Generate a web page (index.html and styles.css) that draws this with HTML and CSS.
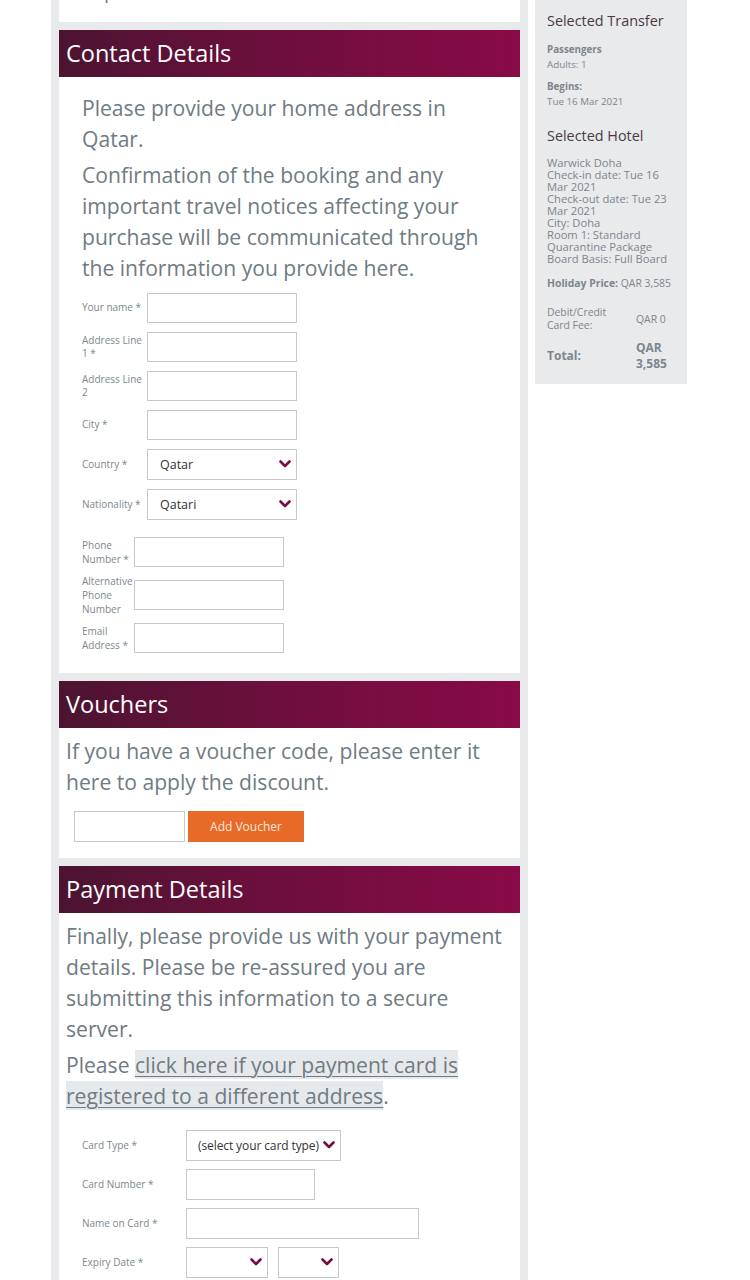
FILE: index.html
```html
<!DOCTYPE html>
<html lang="en">
<head>
<meta charset="utf-8">
<title>Booking details</title>
<link rel="stylesheet" href="styles.css">
</head>
<body>
<div class="page">
  <div class="main">
    <div class="panel top-panel"><p>p</p></div>

    <section class="panel">
      <h2 class="panel-head">Contact Details</h2>
      <div class="panel-body contact-body">
        <p class="lead">Please provide your home address in Qatar.</p>
        <p class="lead">Confirmation of the booking and any important travel notices affecting your purchase will be communicated through the information you provide here.</p>
        <div class="form-grid addr-grid">
          <label>Your name *</label><input type="text">
          <label>Address Line 1 *</label><input type="text">
          <label>Address Line 2</label><input type="text">
          <label>City *</label><input type="text">
          <label>Country *</label>
          <div class="select-wrap"><select><option>Qatar</option></select><svg class="chev" viewBox="0 0 12 8"><path d="M1.5 1.5 L6 6 L10.5 1.5"/></svg></div>
          <label>Nationality *</label>
          <div class="select-wrap"><select><option>Qatari</option></select><svg class="chev" viewBox="0 0 12 8"><path d="M1.5 1.5 L6 6 L10.5 1.5"/></svg></div>
        </div>
        <div class="form-grid phone-grid">
          <label>Phone Number *</label><input type="text">
          <label>Alternative Phone Number</label><input type="text">
          <label>Email Address *</label><input type="text">
        </div>
      </div>
    </section>

    <section class="panel">
      <h2 class="panel-head">Vouchers</h2>
      <div class="panel-body voucher-body">
        <p class="lead">If you have a voucher code, please enter it here to apply the discount.</p>
        <div class="voucher-row">
          <input type="text" class="voucher-input">
          <button type="button" class="btn-orange">Add Voucher</button>
        </div>
      </div>
    </section>

    <section class="panel">
      <h2 class="panel-head">Payment Details</h2>
      <div class="panel-body payment-body">
        <p class="lead">Finally, please provide us with your payment details. Please be re-assured you are submitting this information to a secure server.</p>
        <p class="lead">Please <a href="#" class="hl-link">click here if your payment card is registered to a different address</a>.</p>
        <div class="form-grid pay-grid">
          <label>Card Type *</label>
          <div class="select-wrap w155"><select class="card-type"><option>(select your card type)</option></select><svg class="chev" viewBox="0 0 12 8"><path d="M1.5 1.5 L6 6 L10.5 1.5"/></svg></div>
          <label>Card Number *</label><input type="text" class="w129">
          <label>Name on Card *</label><input type="text" class="w233">
          <label>Expiry Date *</label>
          <div class="expiry">
            <div class="select-wrap w82"><select><option></option></select><svg class="chev" viewBox="0 0 12 8"><path d="M1.5 1.5 L6 6 L10.5 1.5"/></svg></div>
            <div class="select-wrap w61"><select><option></option></select><svg class="chev" viewBox="0 0 12 8"><path d="M1.5 1.5 L6 6 L10.5 1.5"/></svg></div>
          </div>
        </div>
      </div>
    </section>
  </div>

  <aside class="sidebar">
    <h3 class="side-title">Selected Transfer</h3>
    <div class="side-block">
      <div class="side-label">Passengers</div>
      <div>Adults: 1</div>
    </div>
    <div class="side-block">
      <div class="side-label">Begins:</div>
      <div>Tue 16 Mar 2021</div>
    </div>
    <h3 class="side-title hotel-title">Selected Hotel</h3>
    <div class="hotel-info">
      <div>Warwick Doha</div>
      <div>Check-in date: Tue 16 Mar 2021</div>
      <div>Check-out date: Tue 23 Mar 2021</div>
      <div>City: Doha</div>
      <div>Room 1: Standard Quarantine Package</div>
      <div>Board Basis: Full Board</div>
    </div>
    <div class="price-line"><b>Holiday Price:</b> QAR 3,585</div>
    <div class="totals">
      <div class="t-label">Debit/Credit Card Fee:</div><div class="t-val">QAR 0</div>
      <div class="t-label strong">Total:</div><div class="t-val strong">QAR 3,585</div>
    </div>
  </aside>
</div>
</body>
</html>
```

FILE: styles.css
```css
* { box-sizing: border-box; }
html, body { margin: 0; padding: 0; background: #fff; }
body {
  font-family: "Open Sans", Lato, Arial, sans-serif;
  color: #6f7a82;
  width: 750px;
}
.page {
  display: flex;
  align-items: flex-start;
  gap: 7px;
  padding-left: 51px;
}
.main {
  width: 477px;
  background: #e8eaec;
  padding: 0 8px;
}
.panel {
  background: #fff;
  margin-bottom: 8px;
}
.top-panel {
  height: 22px;
  overflow: hidden;
  padding-left: 45px;
}
.top-panel p {
  margin: -22px 0 0;
  font-size: 20px;
  line-height: 26px;
}
.panel-head {
  margin: 0;
  height: 47px;
  line-height: 46px;
  padding-left: 7px;
  font-size: 23.5px;
  font-weight: 400;
  color: #fff;
  background: linear-gradient(90deg, #4c1431 0%, #6c0f3c 45%, #880a47 100%);
}
.lead {
  margin: 0 0 5px;
  font-size: 21.1px;
  line-height: 31px;
  color: #707b83;
}
.contact-body { padding: 15px 23px 20px; }
.voucher-body { padding: 7px 8px 16px 7px; }
.payment-body { padding: 7px 8px 6px 7px; }

.form-grid {
  display: grid;
  align-items: center;
  font-size: 10px;
  line-height: 13.5px;
}
.form-grid label { color: #7d878e; }
.addr-grid {
  margin-top: 10px;
  grid-template-columns: 65px 150px;
  row-gap: 9px;
}
.phone-grid {
  margin-top: 17px;
  grid-template-columns: 52px 150px;
  row-gap: 7px;
  line-height: 14px;
}
.pay-grid {
  margin: 19px 0 0 16px;
  grid-template-columns: 104px auto;
  row-gap: 8px;
  justify-items: start;
}
input[type="text"] {
  height: 30px;
  width: 150px;
  border: 1px solid #c6c8ca;
  background: #fff;
  margin: 0;
  padding: 0 8px;
  font: inherit;
}
.pay-grid input[type="text"] { height: 31px; }
.select-wrap {
  position: relative;
  width: 150px;
  height: 31px;
}
.select-wrap select {
  -webkit-appearance: none;
  appearance: none;
  width: 100%;
  height: 100%;
  border: 1px solid #c6c8ca;
  background: #fff;
  border-radius: 0;
  margin: 0;
  padding: 0 12px;
  font-family: "Open Sans", Lato, Arial, sans-serif;
  font-size: 12.5px;
  color: #333;
}
.chev {
  position: absolute;
  right: 6px;
  top: 11px;
  width: 12px;
  height: 8px;
  fill: none;
  stroke: #7a0c45;
  stroke-width: 2.6;
  stroke-linecap: round;
  stroke-linejoin: round;
}
.w155 { width: 155px; }
.w129 { width: 129px !important; }
.w233 { width: 233px !important; }
.w82 { width: 82px; }
.w61 { width: 61px; }
.select-wrap .card-type { padding: 0 0 0 11px; font-size: 12px; letter-spacing: -0.1px; }
.expiry { display: flex; gap: 10px; }

.voucher-row {
  display: flex;
  gap: 3px;
  margin: 14px 0 0 8px;
}
.voucher-input { width: 111px !important; height: 31px !important; }
.btn-orange {
  width: 116px;
  height: 31px;
  border: 0;
  background: #e86a28;
  color: #fde8dc;
  font-family: "Open Sans", Lato, Arial, sans-serif;
  font-size: 12px;
  padding: 0;
}
.hl-link {
  color: #707b83;
  background: #e6e9eb;
  text-decoration: underline;
  text-decoration-thickness: 1px;
  text-underline-offset: 3px;
}

.sidebar {
  width: 152px;
  min-height: 381px;
  background: #e9eaec;
  padding: 12px 8px 12px 12px;
  font-size: 9.8px;
  line-height: 15px;
  color: #7c868d;
}
.side-title {
  margin: 0 0 12px;
  font-size: 14.4px;
  line-height: 18px;
  font-weight: 400;
  color: #4a3a45;
}
.side-block { margin-bottom: 7px; }
.side-label { font-weight: 700; color: #7c868d; }
.hotel-title { margin-top: 18px; margin-bottom: 12px; }
.hotel-info {
  font-size: 11.2px;
  line-height: 12px;
}
.price-line {
  margin-top: 11px;
  font-size: 10.4px;
}
.price-line b { font-weight: 700; }
.totals {
  margin-top: 15px;
  display: grid;
  grid-template-columns: 89px auto;
  align-items: center;
  row-gap: 8px;
  font-size: 10.4px;
  line-height: 13px;
}
.t-label { max-width: 76px; }
.totals .strong { font-weight: 700; font-size: 12px; line-height: 16px; }
```
